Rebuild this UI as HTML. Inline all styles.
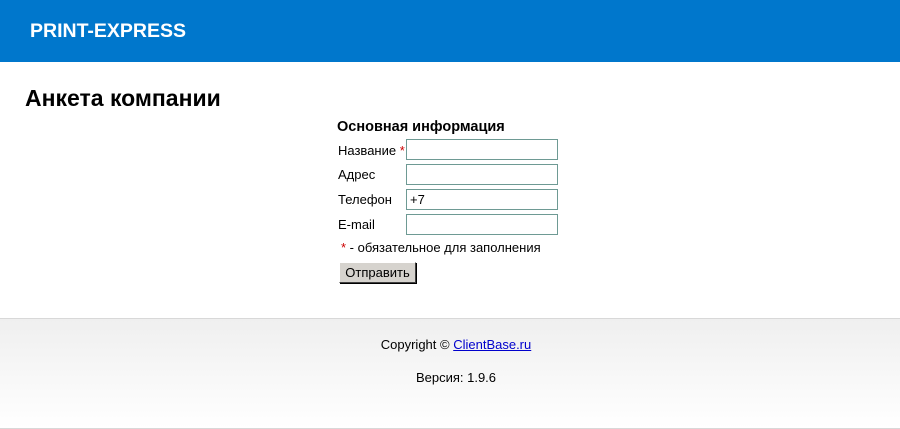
<!DOCTYPE html>
<html><head><meta charset="utf-8"><style>
body{margin:0;width:900px;height:429px;overflow:hidden;background:#fff;font-family:"Liberation Sans",Arial,sans-serif;font-size:13px;color:#000;position:relative}
.hdr{position:absolute;left:0;top:0;width:900px;height:62px;background:#0077cc}
.hdr span{position:absolute;left:30px;top:20px;color:#fff;font-weight:bold;font-size:19.5px}
h1{position:absolute;left:25px;top:85px;margin:0;font-size:23px;font-weight:bold}
.t{position:absolute;white-space:nowrap}
.in{position:absolute;left:406px;height:19px;border:1px solid #6e9a94;background:#fff;font-size:13px;line-height:19px;padding-left:3px;width:147px}
.btn{position:absolute;left:339px;top:262px;width:75px;height:19px;background:#d6d3ce;border:1px solid;border-color:#fff #404040 #404040 #fff;box-shadow:1px 1px 0 #000;font-size:13px;line-height:19px;text-align:center}
.ft{position:absolute;left:0;top:318px;width:900px;height:109px;border-top:1px solid #d8d8d8;border-bottom:1px solid #d8d8d8;background:linear-gradient(#efefef,#fff)}
a{color:#0000cc;text-decoration:underline}
.r{color:#c00}
</style></head><body>
<div class="hdr"><span>PRINT-EXPRESS</span></div>
<h1>Анкета компании</h1>
<div class="t" style="left:337px;top:119px;font-weight:bold;font-size:14.5px">Основная информация</div>
<div class="t" style="left:338px;top:143px">Название <span class="r">*</span></div>
<div class="t" style="left:338px;top:167px">Адрес</div>
<div class="t" style="left:338px;top:192px">Телефон</div>
<div class="t" style="left:338px;top:217px">E-mail</div>
<div class="in" style="top:139px"></div>
<div class="in" style="top:164px"></div>
<div class="in" style="top:189px">+7</div>
<div class="in" style="top:214px"></div>
<div class="t" style="left:341px;top:240px"><span class="r">*</span> - обязательное для заполнения</div>
<div class="btn">Отправить</div>
<div class="ft">
<div class="t" style="left:6px;width:900px;text-align:center;top:18px">Copyright © <a>ClientBase.ru</a></div>
<div class="t" style="left:6px;width:900px;text-align:center;top:51px">Версия: 1.9.6</div>
</div>
</body></html>
